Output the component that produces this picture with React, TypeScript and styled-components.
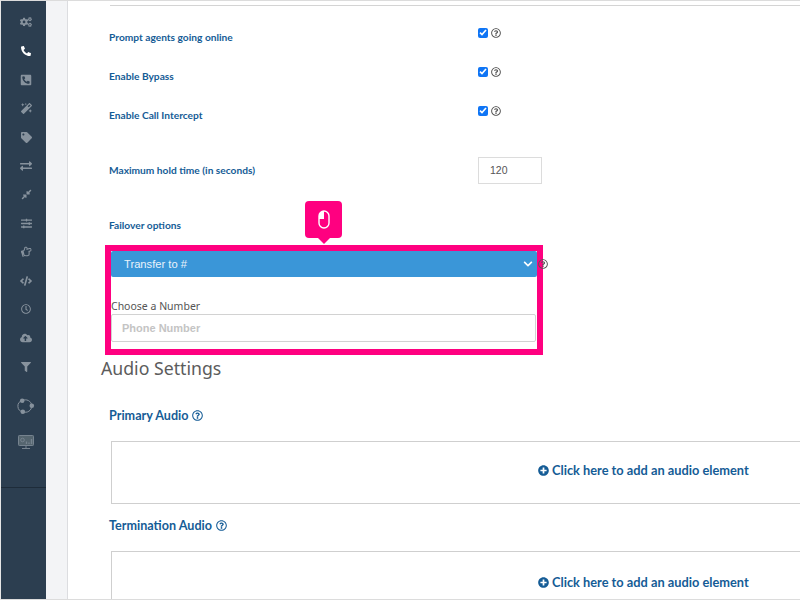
import React from 'react';
import styled, { createGlobalStyle } from 'styled-components';
import {
  FaCogs, FaPhone, FaPhoneSquare, FaMagic, FaTag, FaExchangeAlt, FaCompressAlt, FaSlidersH,
  FaRegHandPointRight, FaCode, FaRegClock, FaCloudUploadAlt, FaFilter, FaPlusCircle, FaChevronDown, FaRegQuestionCircle,
} from 'react-icons/fa';

const Global = createGlobalStyle`
  html, body { margin: 0; padding: 0; width: 800px; height: 600px; overflow: hidden; background: #fff; }
  * { box-sizing: border-box; }
`;

const Page = styled.div`
  width: 800px;
  height: 600px;
  display: flex;
  overflow: hidden;
  border-top: 1px solid #dcdcdc;
  border-bottom: 1px solid #dcdcdc;
  border-left: 1px solid #e6e6e6;
  font-family: "Noto Sans", sans-serif;
`;

const Sidebar = styled.nav`
  width: 45px;
  flex: none;
  background: #2c3e50;
  display: flex;
  flex-direction: column;
  padding-top: 7px;
`;

const NavItem = styled.div<{ $active?: boolean; $h?: number }>`
  height: ${p => p.$h ?? 28.7}px;
  flex: none;
  display: flex;
  align-items: center;
  justify-content: center;
  color: ${p => (p.$active ? '#ffffff' : '#87929d')};
  font-size: 11px;
  padding-left: 5px;
`;

const Mirrored = styled.span`
  display: flex;
  transform: scaleX(-1);
`;

const NavRule = styled.div`
  height: 1px;
  background: #1e2c3a;
  margin-top: 34px;
`;

const Gutter = styled.div`
  flex: none;
  background: #f3f4f6;
  border-right: 1px solid #dcdde0;
  width: 22px;
`;

const Main = styled.main`
  flex: 1;
  min-width: 0;
  overflow: hidden;
  padding-left: 41px;
`;

const TopBox = styled.div`
  height: 5px;
  margin-left: 1px;
  margin-bottom: 11px;
  border-bottom: 1px solid #d4d4d4;
`;

const Row = styled.div<{ $h: number }>`
  display: grid;
  grid-template-columns: 369px 1fr;
  align-items: center;
  height: ${p => p.$h}px;
`;

const Label = styled.label`
  font-family: Lato, sans-serif;
  font-size: 10.2px;
  font-weight: 700;
  color: #155c96;
`;

const CheckCell = styled.div`
  display: flex;
  align-items: center;
  gap: 3px;
  margin-top: -8px;
`;

const Check = styled.span`
  width: 10px;
  height: 10px;
  border-radius: 2px;
  background: #0f75f5;
  display: flex;
  align-items: center;
  justify-content: center;
`;

const Help = styled(FaRegQuestionCircle)<{ $c?: string; $s?: number }>`
  color: ${p => p.$c ?? '#555'};
  font-size: ${p => p.$s ?? 10}px;
  flex: none;
`;

const NumberInput = styled.div`
  width: 64px;
  height: 27px;
  margin-top: 1px;
  border: 1px solid #dcdcdc;
  padding-left: 11px;
  display: flex;
  align-items: center;
  font: 10.5px "Liberation Sans", sans-serif;
  color: #555;
`;

const Highlight = styled.div`
  position: relative;
  width: 438px;
  height: 110px;
  margin-left: -4px;
  border: 6px solid #ff0080;
`;

const Badge = styled.div`
  position: absolute;
  left: 194px;
  top: -50px;
  width: 37px;
  height: 37px;
  border-radius: 4px;
  background: #ff0080;
  display: flex;
  align-items: center;
  justify-content: center;
  &::after {
    content: '';
    position: absolute;
    left: 13px;
    bottom: -6px;
    border-left: 6px solid transparent;
    border-right: 6px solid transparent;
    border-top: 6px solid #ff0080;
  }
`;

const Select = styled.div`
  height: 26px;
  width: 426px;
  background: #3a96d8;
  border-radius: 2px;
  display: flex;
  align-items: center;
  justify-content: space-between;
  padding: 0 4px 0 13px;
  font: 11.2px "Liberation Sans", sans-serif;
  color: #e9f3fb;
`;

const OutsideHelp = styled.div`
  position: absolute;
  left: 427px;
  top: 8px;
  line-height: 0;
`;

const FieldCaption = styled.div`
  margin-top: 20px;
  height: 17px;
  line-height: 19px;
  font-size: 10.5px;
  color: #555;
`;

const PhoneField = styled.div`
  width: 425px;
  height: 28px;
  border: 1px solid #d2d2d2;
  border-radius: 2px;
  padding-left: 10px;
  display: flex;
  align-items: center;
  font: 700 11px "Liberation Sans", sans-serif;
  color: #c4c4c4;
`;

const SectionTitle = styled.h2`
  margin: -1px 0 0 -8px;
  height: 28px;
  line-height: 28px;
  font-size: 17.7px;
  font-weight: 400;
  color: #5c5c5c;
`;

const AudioHead = styled.div<{ $top: number }>`
  display: flex;
  align-items: center;
  gap: 4px;
  margin-top: ${p => p.$top}px;
  height: 18px;
  font-family: Lato, sans-serif;
  font-size: 12.6px;
  font-weight: 700;
  color: #155c96;
`;

const AudioBox = styled.div<{ $h: number; $pad: number }>`
  height: ${p => p.$h}px;
  margin: 17px 0 0 2px;
  width: 700px;
  border: 1px solid #cfcfcf;
  padding-top: ${p => p.$pad}px;
  padding-left: 426px;
`;

const AddLink = styled.div`
  display: flex;
  align-items: center;
  gap: 3px;
  font-family: Lato, sans-serif;
  font-size: 12.8px;
  font-weight: 700;
  color: #155c96;
  white-space: nowrap;
`;

const CirclesIcon = () => (
  <svg width="18" height="18" viewBox="0 0 18 18" fill="none">
    <path d="M5.2 3.7A5.6 5.6 0 0 0 5.8 14.7M5.8 14.7A6.4 6.4 0 0 0 14.8 8.7M14.8 8.7A6.4 6.4 0 0 0 5.2 3.7" stroke="currentColor" strokeWidth="1" />
    <circle cx="5.2" cy="3.7" r="2.3" fill="currentColor" />
    <circle cx="14.8" cy="8.7" r="2.3" fill="currentColor" />
    <circle cx="5.8" cy="14.7" r="2.3" fill="currentColor" />
  </svg>
);

const MonitorIcon = () => (
  <svg width="16" height="14" viewBox="0 0 16 14" fill="none">
    <rect x="0.5" y="0.5" width="15" height="10" rx="0.8" stroke="#76838f" fill="#55656f" />
    <circle cx="4.5" cy="5" r="1.8" stroke="#76838f" strokeWidth="1" />
    <path d="M8.5 9V6.5M11 9V7.5M13.5 9V4" stroke="#76838f" strokeWidth="1.3" />
    <path d="M8 11v2M4 13.5h8" stroke="#76838f" strokeWidth="1" />
  </svg>
);

const MouseIcon = () => (
  <svg width="12" height="19" viewBox="0 0 12 19" fill="none">
    <rect x="1" y="1" width="10" height="17" rx="5" stroke="#fff" strokeWidth="1.4" />
    <path d="M6 1a5 5 0 0 0-5 5v3h5z" fill="#fff" />
  </svg>
);

const CheckMark = () => (
  <svg width="8" height="7" viewBox="0 0 8 7" fill="none">
    <path d="M1 3.6 3 5.6 7 1" stroke="#fff" strokeWidth="1.6" />
  </svg>
);

const CheckRow = ({ label, h }: { label: string; h: number }) => (
  <Row $h={h}>
    <Label>{label}</Label>
    <CheckCell>
      <Check><CheckMark /></Check>
      <Help />
    </CheckCell>
  </Row>
);

export default function App() {
  return (
    <>
      <Global />
      <Page>
        <Sidebar>
          <NavItem><FaCogs size={12} /></NavItem>
          <NavItem $active><Mirrored><FaPhone size={10} /></Mirrored></NavItem>
          <NavItem><Mirrored><FaPhoneSquare size={12} /></Mirrored></NavItem>
          <NavItem><FaMagic /></NavItem>
          <NavItem><FaTag /></NavItem>
          <NavItem><FaExchangeAlt size={12} /></NavItem>
          <NavItem><FaCompressAlt /></NavItem>
          <NavItem><FaSlidersH /></NavItem>
          <NavItem><FaRegHandPointRight style={{ transform: 'rotate(-15deg)' }} /></NavItem>
          <NavItem><FaCode size={12} /></NavItem>
          <NavItem><FaRegClock size={10} /></NavItem>
          <NavItem><FaCloudUploadAlt size={12} /></NavItem>
          <NavItem><FaFilter size={10} /></NavItem>
          <NavItem $h={50}><CirclesIcon /></NavItem>
          <NavItem $h={22}><MonitorIcon /></NavItem>
          <NavRule />
        </Sidebar>
        <Gutter />
        <Main>
          <TopBox />
          <CheckRow label="Prompt agents going online" h={39} />
          <CheckRow label="Enable Bypass" h={39} />
          <CheckRow label="Enable Call Intercept" h={39} />
          <Row $h={71}>
            <Label>Maximum hold time (in seconds)</Label>
            <NumberInput>120</NumberInput>
          </Row>
          <Row $h={40}>
            <Label>Failover options</Label>
          </Row>
          <Highlight>
            <Badge><MouseIcon /></Badge>
            <Select>
              Transfer to #
              <FaChevronDown size={10} color="#fff" />
            </Select>
            <OutsideHelp><Help $s={10} /></OutsideHelp>
            <FieldCaption>Choose a Number</FieldCaption>
            <PhoneField>Phone Number</PhoneField>
          </Highlight>
          <SectionTitle>Audio Settings</SectionTitle>
          <AudioHead $top={24}>Primary Audio <Help $c="#155c96" $s={11} /></AudioHead>
          <AudioBox $h={63} $pad={20}>
            <AddLink><FaPlusCircle size={11} /> Click here to add an audio element</AddLink>
          </AudioBox>
          <AudioHead $top={12}>Termination Audio <Help $c="#155c96" $s={11} /></AudioHead>
          <AudioBox $h={70} $pad={22}>
            <AddLink><FaPlusCircle size={11} /> Click here to add an audio element</AddLink>
          </AudioBox>
        </Main>
      </Page>
    </>
  );
}
